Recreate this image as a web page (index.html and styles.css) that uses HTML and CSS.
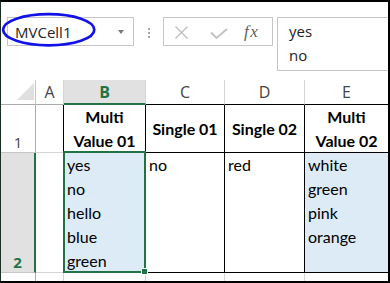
FILE: index.html
```html
<!DOCTYPE html>
<html lang="en">
<head>
<meta charset="UTF-8">
<meta name="viewport" content="width=device-width, initial-scale=1.0">
<title>MVCell1</title>
<link rel="stylesheet" href="styles.css">
</head>
<body>
<div class="frame">
    <div class="fbar">
        <div class="namebox">
            <span class="name">MVCell1</span>
            <span class="caret"></span>
        </div>
        <div class="grip"><i></i><i></i><i></i></div>
        <div class="fbtns">
            <svg class="ico-x" width="13" height="13" viewBox="0 0 13 13">
                <path d="M0.5 0.5 L12.5 12.5 M12.5 0.5 L0.5 12.5" stroke="#bdbdbd" stroke-width="1.3" fill="none"/>
            </svg>
            <svg class="ico-ok" width="18" height="12" viewBox="0 0 18 12">
                <path d="M1 4.5 L6.5 10 L17 1" stroke="#c2c2c2" stroke-width="2" fill="none"/>
            </svg>
            <span class="fx">fx</span>
        </div>
        <div class="fbox">
            <div>yes</div>
            <div>no</div>
        </div>
    </div>

    <div class="sheet">
        <!-- column headers -->
        <div class="corner"><span class="tri"></span></div>
        <div class="ch">A</div>
        <div class="ch on">B</div>
        <div class="ch dark">C</div>
        <div class="ch dark">D</div>
        <div class="ch dark last">E</div>

        <!-- row 1 -->
        <div class="rh">1</div>
        <div class="c lb"></div>
        <div class="c b hd">Multi<br>Value 01</div>
        <div class="c b hd">Single 01</div>
        <div class="c b hd">Single 02</div>
        <div class="c b hd nr">Multi<br>Value 02</div>

        <!-- row 2 -->
        <div class="rh on">2</div>
        <div class="c lb"></div>
        <div class="c b fill">yes<br>no<br>hello<br>blue<br>green</div>
        <div class="c b">no</div>
        <div class="c b">red</div>
        <div class="c b fill nr">white<br>green<br>pink<br>orange</div>

        <!-- row 3 -->
        <div class="rh">3</div>
        <div class="c"></div>
        <div class="c"></div>
        <div class="c"></div>
        <div class="c"></div>
        <div class="c nr"></div>

        <div class="selection"><span class="handle"></span></div>
    </div>

    <svg class="ring" width="100" height="40" viewBox="0 0 100 40">
        <ellipse cx="47.7" cy="17.7" rx="45.6" ry="15.6" stroke="#1212e8" stroke-width="2.7" fill="none"/>
    </svg>
</div>
</body>
</html>
```

FILE: styles.css
```css
* {
    box-sizing: border-box;
}
body {
    margin: 0;
    font-family: "Open Sans", "Noto Sans", sans-serif;
    background: #fff;
}
.frame {
    position: relative;
    width: 390px;
    height: 283px;
    border: 2px solid #000;
    border-left: 1px solid #1b2f22;
    overflow: hidden;
    background: #fff;
}

/* formula bar */
.fbar {
    display: flex;
    align-items: flex-start;
    height: 69px;
    padding: 15px 0 0 6px;
}
.namebox {
    display: flex;
    align-items: center;
    width: 127px;
    height: 29px;
    border: 1px solid #c6c6c6;
}
.name {
    padding-left: 7px;
    font-size: 15px;
    color: #262626;
}
.caret {
    margin-left: auto;
    margin-right: 9px;
    width: 0;
    height: 0;
    border-left: 3px solid transparent;
    border-right: 3px solid transparent;
    border-top: 4px solid #7a7a7a;
}
.grip {
    display: flex;
    flex-direction: column;
    align-items: center;
    gap: 2px;
    width: 29px;
    height: 29px;
    padding-top: 11px;
}
.grip i {
    width: 2px;
    height: 2px;
    background: #a8a8a8;
}
.fbtns {
    display: flex;
    align-items: center;
    width: 110px;
    height: 29px;
    border: 1px solid #c6c6c6;
}
.ico-x {
    margin-left: 11px;
    margin-top: 2px;
}
.ico-ok {
    margin-left: 22px;
    margin-top: 4px;
}
.fx {
    margin-left: 16px;
    font-family: "Liberation Serif", serif;
    font-style: italic;
    font-size: 17px;
    letter-spacing: 1.5px;
    color: #5f5f5f;
}
.fbox {
    flex: 1;
    height: 54px;
    margin-left: 4px;
    padding: 1px 0 0 11px;
    border: 1px solid #c6c6c6;
    border-right: none;
    font-size: 15px;
    line-height: 24px;
    color: #222;
}

/* sheet grid */
.sheet {
    position: relative;
    display: grid;
    grid-template-columns: 35px 28px 82px 79px 80px 83px;
    grid-template-rows: 25px 48px 120px 24px;
    margin-top: 9px;
}
.sheet > div {
    border-right: 1px solid #d4d4d4;
    border-bottom: 1px solid #d4d4d4;
}
.corner {
    display: flex;
    justify-content: flex-end;
    align-items: flex-end;
    padding: 0 1px 4px 0;
    border-right-color: #c6c6c6 !important;
    border-bottom-color: #ababab !important;
}
.tri {
    width: 0;
    height: 0;
    border-left: 17px solid transparent;
    border-bottom: 17px solid #dfdfdf;
}
.ch {
    display: flex;
    align-items: center;
    justify-content: center;
    font-size: 16px;
    color: #444;
    border-right-color: #d4d4d4;
    border-bottom-color: #ababab !important;
}
.ch.on {
    background: #e1e1e1;
    color: #217346;
    font-weight: 700;
    border-bottom: 2px solid #217346 !important;
}
.ch.dark {
    border-bottom-color: #000 !important;
}
.ch.last {
    border-right: none !important;
}
.rh {
    display: flex;
    justify-content: center;
    align-items: flex-end;
    font-size: 15px;
    line-height: 20px;
    color: #444;
    border-right-color: #ababab !important;
    border-bottom-color: #c6c6c6 !important;
}
.rh.on {
    background: #e1e1e1;
    color: #217346;
    font-weight: 700;
    border-right: 2px solid #217346 !important;
}
.c {
    padding: 0 3px;
    font-family: Lato, "Liberation Sans", sans-serif;
    font-size: 16px;
    line-height: 24px;
    color: #000;
}
.c.lb {
    border-right-color: #000;
}
.c.b {
    border-right-color: #000;
    border-bottom-color: #000;
}
.c.hd {
    display: flex;
    align-items: center;
    justify-content: center;
    text-align: center;
    font-weight: 700;
}
.c.fill {
    background: #ddebf7;
}
.c.nr {
    border-right: none;
}

/* active cell outline */
.sheet > .selection {
    position: absolute;
    left: 62px;
    top: 71px;
    width: 83px;
    height: 122px;
    border: 2px solid #217346;
}
.handle {
    position: absolute;
    right: -4px;
    bottom: -4px;
    width: 7px;
    height: 7px;
    background: #217346;
    border: 1px solid #fff;
}

.ring {
    position: absolute;
    left: 0;
    top: 10px;
}
```
